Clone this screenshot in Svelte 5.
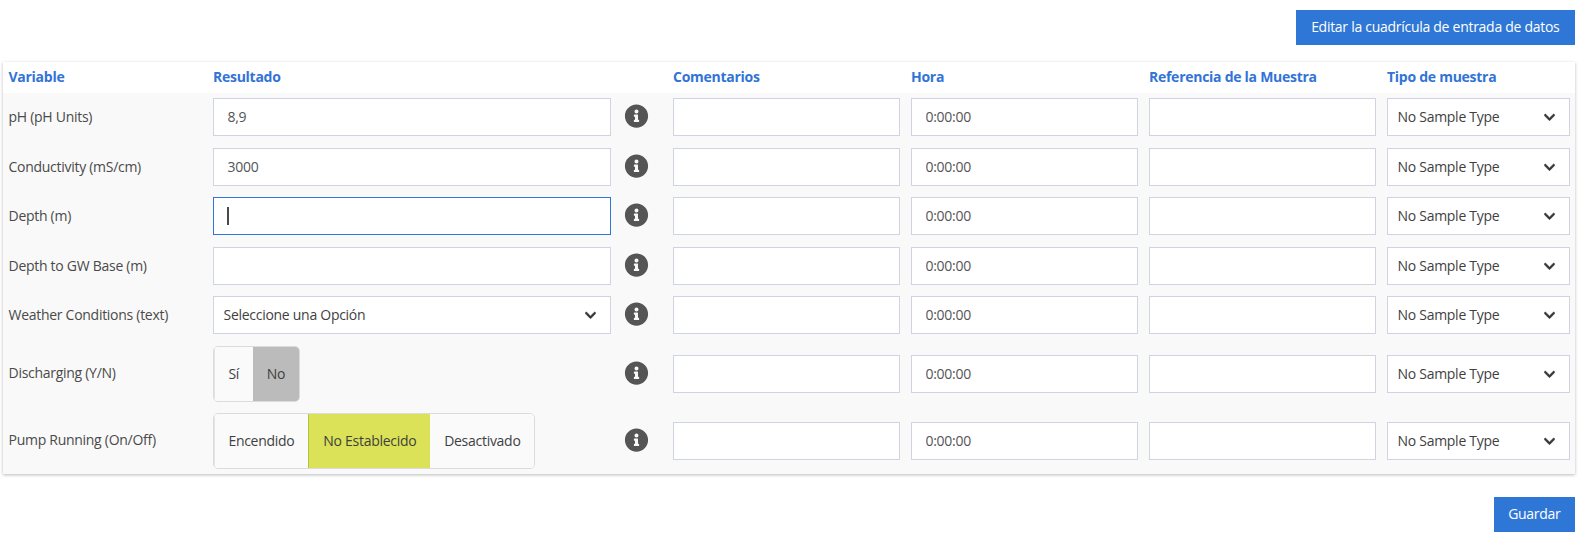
<script>
  const columns = [
    { label: 'Variable', width: 204.5 },
    { label: 'Resultado', width: 409.5 },
    { label: '', width: 50.5 },
    { label: 'Comentarios', width: 238 },
    { label: 'Hora', width: 238 },
    { label: 'Referencia de la Muestra', width: 238 },
    { label: 'Tipo de muestra', width: 194 }
  ];

  const rows = [
    { label: 'pH (pH Units)', kind: 'input', value: '8,9' },
    { label: 'Conductivity (mS/cm)', kind: 'input', value: '3000' },
    { label: 'Depth (m)', kind: 'input', value: '', focused: true },
    { label: 'Depth to GW Base (m)', kind: 'input', value: '' },
    { label: 'Weather Conditions (text)', kind: 'select' },
    { label: 'Discharging (Y/N)', kind: 'toggle', options: ['Sí', 'No'], active: 1, tone: 'grey' },
    { label: 'Pump Running (On/Off)', kind: 'toggle', options: ['Encendido', 'No Establecido', 'Desactivado'], active: 1, tone: 'lime' }
  ];

  const chevron =
    'M207.029 381.476L12.686 187.132c-9.373-9.373-9.373-24.569 0-33.941l22.667-22.667c9.357-9.357 24.522-9.375 33.901-.04L224 284.505l154.745-154.021c9.379-9.335 24.544-9.317 33.901.04l22.667 22.667c9.373 9.373 9.373 24.569 0 33.941L240.971 381.476c-9.373 9.372-24.569 9.372-33.942 0z';
  const info =
    'M256 8C119.043 8 8 119.083 8 256c0 136.997 111.043 248 248 248s248-111.003 248-248C504 119.083 392.957 8 256 8zm0 110c23.196 0 42 18.804 42 42s-18.804 42-42 42-42-18.804-42-42 18.804-42 42-42zm56 254c0 6.627-5.373 12-12 12h-88c-6.627 0-12-5.373-12-12v-24c0-6.627 5.373-12 12-12h12v-64h-12c-6.627 0-12-5.373-12-12v-24c0-6.627 5.373-12 12-12h64c6.627 0 12 5.373 12 12v100h12c6.627 0 12 5.373 12 12v24z';
</script>

{#snippet dropdown(text)}
  <div class="select-wrap">
    <select class="field select">
      <option>{text}</option>
    </select>
    <svg class="chevron" viewBox="0 0 448 512" aria-hidden="true"><path d={chevron} /></svg>
  </div>
{/snippet}

<div class="page">
  <div class="actions top">
    <button class="primary" type="button">Editar la cuadrícula de entrada de datos</button>
  </div>

  <table class="grid">
    <colgroup>
      {#each columns as col}
        <col style="width: {col.width}px" />
      {/each}
    </colgroup>
    <thead>
      <tr>
        {#each columns as col}
          <th>{col.label}</th>
        {/each}
      </tr>
    </thead>
    <tbody>
      {#each rows as row}
        <tr>
          <td class="label" class:tall={row.kind === 'toggle'}>{row.label}</td>
          <td>
            {#if row.kind === 'input'}
              <div class="input-wrap">
                <input class="field result" class:focused={row.focused} type="text" value={row.value} />
                {#if row.focused}<span class="caret"></span>{/if}
              </div>
            {:else if row.kind === 'select'}
              {@render dropdown('Seleccione una Opción')}
            {:else}
              <div class="toggle">
                {#each row.options as opt, i}
                  <span class="seg {i === row.active ? row.tone : ''}">{opt}</span>
                {/each}
              </div>
            {/if}
          </td>
          <td>
            <svg class="info" viewBox="0 0 512 512" aria-hidden="true"><path d={info} /></svg>
          </td>
          <td><input class="field" type="text" /></td>
          <td><input class="field result" type="text" value="0:00:00" /></td>
          <td><input class="field" type="text" /></td>
          <td>{@render dropdown('No Sample Type')}</td>
        </tr>
      {/each}
    </tbody>
  </table>

  <div class="actions bottom">
    <button class="primary" type="button">Guardar</button>
  </div>
</div>

<style>
  :global(body) {
    margin: 0;
    background: #fff;
  }

  .page {
    box-sizing: border-box;
    width: 1583px;
    padding: 10px 8px 8px 2.5px;
    font-family: 'Open Sans', 'Liberation Sans', sans-serif;
    font-size: 14px;
    letter-spacing: -0.28px;
    color: #4a4a4a;
  }

  .actions {
    display: flex;
    justify-content: flex-end;
  }

  .actions.top {
    margin-bottom: 17px;
  }

  .actions.bottom {
    margin-top: 22.75px;
  }

  .top .primary {
    padding-inline: 15.5px;
  }

  .bottom .primary {
    padding-inline: 14.5px;
  }

  .primary {
    height: 35px;
    padding: 0 15px 2px;
    border: 0;
    border-radius: 0;
    background: #2e77d6;
    color: #fff;
    font: inherit;
    letter-spacing: inherit;
  }

  .grid {
    width: 1572.5px;
    table-layout: fixed;
    border-collapse: collapse;
    background: #f9f9f9;
    box-shadow: 0 1px 3px rgba(10, 10, 10, 0.28);
  }

  th {
    height: 30.5px;
    padding: 0 6px 1.5px;
    background: #fff;
    color: #3273d6;
    font-weight: 700;
    text-align: left;
    box-sizing: border-box;
    letter-spacing: -0.27px;
  }

  td {
    padding: 5.75px 5.5px;
    vertical-align: middle;
  }

  tr:last-child td {
    padding-bottom: 5px;
  }

  td.label {
    padding-left: 6px;
    padding-bottom: 7px;
    color: #4a4a4a;
  }

  td.label.tall {
    padding-bottom: 9px;
  }

  .field {
    display: block;
    box-sizing: border-box;
    width: 100%;
    height: 38px;
    margin: 0;
    padding-bottom: 1px;
    border: 1px solid #d0d4e0;
    border-radius: 0;
    background: #fff;
    color: #4a4a4a;
    font: inherit;
    letter-spacing: inherit;
    outline: none;
  }

  .result {
    padding: 0 14px 1px;
    color: #555;
  }

  .focused {
    border-color: #2e77d6;
  }

  .input-wrap,
  .select-wrap {
    position: relative;
  }

  .caret {
    position: absolute;
    left: 14px;
    top: 10px;
    width: 2px;
    height: 18px;
    background: #4a4a4a;
  }

  .select {
    padding: 0 30px 1px 10px;
    appearance: none;
    color: #3f3f3f;
  }

  .chevron {
    position: absolute;
    right: 15px;
    top: 13px;
    width: 11px;
    height: 12.6px;
    fill: #363636;
    stroke: #363636;
    stroke-width: 20;
    pointer-events: none;
  }

  .info {
    display: block;
    width: 24px;
    height: 24px;
    margin: -2px auto 0;
    transform: translateX(-5.5px);
    fill: #555;
  }

  .toggle {
    display: inline-flex;
    box-sizing: border-box;
    height: 56px;
    border: 1px solid #dbdbdb;
    border-radius: 5px;
    overflow: hidden;
    vertical-align: top;
  }

  .seg {
    display: flex;
    align-items: center;
    padding: 0 13.9px 1px;
    color: #3f3f3f;
    background: #fafafa;
  }

  .seg:first-child {
    border-left: 1px solid #e4e4e4;
  }

  .seg.grey {
    background: #bbb;
  }

  .seg.lime {
    background: #dbe257;
    border-left: 1px solid #b9c040;
  }
</style>
